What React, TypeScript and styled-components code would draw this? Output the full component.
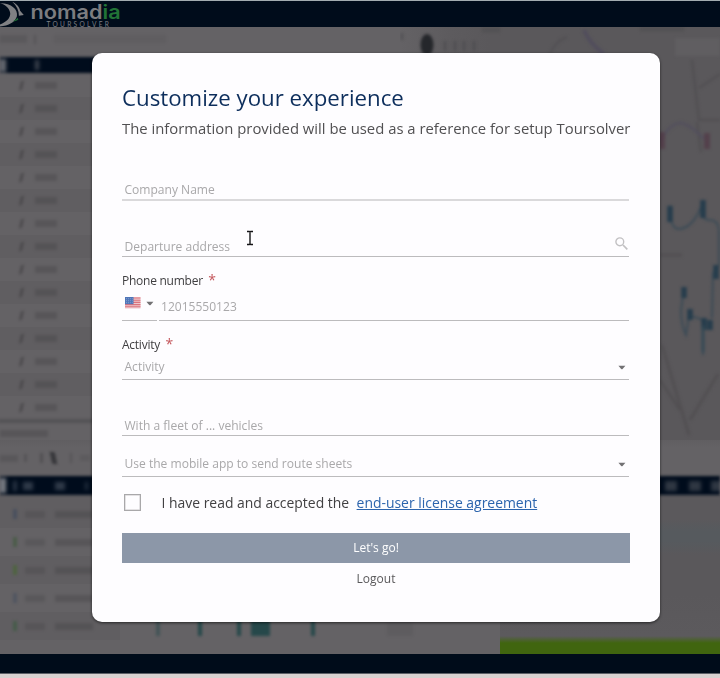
import React from "react";
import styled, { createGlobalStyle } from "styled-components";

const GlobalStyle = createGlobalStyle`
  * { box-sizing: border-box; }
  body { margin: 0; font-family: "Open Sans", sans-serif; background: #000c1a; }
`;

const Page = styled.div`
  width: 720px;
  height: 678px;
  display: flex;
  flex-direction: column;
  overflow: hidden;
`;
const TopBar = styled.header`
  height: 27px;
  flex: none;
  background: #000c1b;
  border-top: 1px solid #a3adb1;
  svg { display: block; overflow: visible; }
`;
const Workspace = styled.main`
  height: 627px;
  flex: none;
  position: relative;
  background: #646265;
`;
const BottomBar = styled.footer`
  height: 24px;
  flex: none;
  background: #000c1a;
  border-bottom: 4px solid #d8d2d0;
  box-shadow: inset 0 -1px #5d6167;
`;

/* Dimmed application behind the dialog */
const Backdrop = styled.div`
  height: 627px;
  display: flex;
  flex-direction: column;
  overflow: hidden;
`;
const Upper = styled.div`
  height: 413px;
  display: grid;
  grid-template-columns: 400px 1fr;
`;
const Sheet = styled.div`
  display: flex;
  flex-direction: column;
  overflow: hidden;
`;
const SheetTools = styled.div<{ $h: number }>`
  height: ${(p) => p.$h}px;
  flex: none;
  display: flex;
  align-items: center;
  gap: 10px;
  padding-bottom: 6px;
`;
const DarkHeader = styled.div<{ $h: number }>`
  height: ${(p) => p.$h}px;
  flex: none;
  display: flex;
  align-items: center;
  background: #000c1c;
  filter: blur(1.6px);
`;
const SheetRow = styled.div<{ $h: number; $alt?: boolean }>`
  height: ${(p) => p.$h}px;
  flex: none;
  display: flex;
  align-items: center;
  background: ${(p) => (p.$alt ? "#605e61" : "#646265")};
`;
const Smudge = styled.span<{ $w: number; $h?: number; $ml?: number; $c?: string; $o?: number; $skew?: number }>`
  width: ${(p) => p.$w}px;
  height: ${(p) => p.$h ?? 8}px;
  margin-left: ${(p) => p.$ml ?? 0}px;
  background: ${(p) => p.$c ?? "#403f42"};
  opacity: ${(p) => p.$o ?? 0.45};
  transform: skewX(${(p) => p.$skew ?? 0}deg);
  filter: blur(1.8px);
  flex: none;
`;
const MapPane = styled.div`
  background: linear-gradient(90deg, #646265, #5d5b5e 50px, #5a585b 90px);
  overflow: hidden;
  svg { display: block; }
`;
const Strip = styled.div`
  height: 36px;
  flex: none;
  display: flex;
  align-items: center;
  background: linear-gradient(#605e61, #646265 8px);
`;
const Lower = styled.div`
  flex: 1;
  display: grid;
  grid-template-columns: 120px 380px 1fr;
`;
const Timeline = styled.div`
  display: flex;
  align-items: flex-end;
  padding-bottom: 18px;
`;
const GreenPane = styled.div`
  display: flex;
  align-items: flex-end;
  background: linear-gradient(#5b595c 0 24px, #565a5e 36px 46px, #5a585b 60px 100px, #5c5a5d 140px);
`;
const GreenStrip = styled.div`
  height: 18px;
  flex: 1;
  background: linear-gradient(#5a5b5900, #40650f 7px);
`;

/* Dialog */
const Dialog = styled.section`
  position: absolute;
  left: 92px;
  top: 26.4px;
  width: 568px;
  height: 568.2px;
  padding: 29.6px 30px 0;
  display: flex;
  flex-direction: column;
  background: #fefdff;
  border-radius: 10px;
  box-shadow: 0 1px 3px rgba(0, 0, 0, 0.6);
`;
const Title = styled.h1`
  margin: 0;
  height: 30px;
  line-height: 30px;
  font-size: 22.25px;
  font-weight: 400;
  color: #0d2e5c;
  white-space: nowrap;
`;
const Subtitle = styled.p`
  margin: 4px 0 1px;
  height: 22px;
  line-height: 22px;
  font-size: 14.85px;
  color: #515052;
  white-space: nowrap;
`;
const Field = styled.div<{ $mt: number; $h: number; $pb: number; $line?: number }>`
  margin-top: ${(p) => p.$mt}px;
  height: ${(p) => p.$h}px;
  width: 507.4px;
  padding: 0 2.5px ${(p) => p.$pb}px;
  display: flex;
  align-items: flex-end;
  justify-content: space-between;
  border-bottom: ${(p) => p.$line ?? 1}px solid ${(p) => (p.$line ? "#dad9db" : "#bcbbbd")};
`;
const Placeholder = styled.span`
  font-size: 12.05px;
  line-height: 16px;
  color: #a9a8aa;
  white-space: nowrap;
`;
const Label = styled.label<{ $mt: number }>`
  margin-top: ${(p) => p.$mt}px;
  height: 16px;
  display: flex;
  gap: 5.5px;
  font-size: 12px;
  line-height: 16px;
  color: #3f3e40;
  letter-spacing: -0.25px;
`;
const Required = styled.span`
  font-size: 14px;
  line-height: 13px;
  color: #c4575c;
`;
const PhoneRow = styled.div`
  display: grid;
  grid-template-columns: 35px 470.4px;
  column-gap: 2px;
  height: 32px;
`;
const PhoneCell = styled.div<{ $pb: number; $pl: number }>`
  display: flex;
  align-items: flex-end;
  gap: 5px;
  padding: 0 0 ${(p) => p.$pb}px ${(p) => p.$pl}px;
  border-bottom: 1px solid #bcbbbd;
`;
const Agreement = styled.div`
  margin-top: 15.6px;
  height: 20px;
  display: flex;
  align-items: center;
  padding-left: 2px;
  font-size: 13.93px;
  line-height: 20px;
  color: #414042;
  white-space: nowrap;
`;
const Checkbox = styled.span`
  width: 17px;
  height: 17px;
  margin-right: 20.5px;
  border: 1px solid #a9a8aa;
  box-shadow: inset 0 0 0 0.5px #c9c8ca;
`;
const License = styled.a`
  margin-left: 7.5px;
  color: #2c64ad;
  text-decoration: underline;
  text-underline-offset: 1px;
`;
const Submit = styled.button`
  margin-top: 20px;
  height: 30.4px;
  flex: none;
  padding: 0;
  border: 0;
  background: #8c97a8;
  color: #fff;
  font: 12px/30px "Open Sans", sans-serif;
`;
const Logout = styled.a`
  margin-top: 7px;
  line-height: 18px;
  text-align: center;
  font-size: 12px;
  color: #5a595b;
`;
const SearchIcon = styled.svg`
  margin: 0 -1px 5px 0;
`;
const Cursor = styled.svg`
  position: absolute;
  left: 246px;
  top: 202.5px;
`;
const CaretIcon = styled.svg<{ $mb: number }>`
  margin-bottom: ${(p) => p.$mb}px;
  margin-right: 1px;
`;

const Caret = ({ mb = 3 }: { mb?: number }) => (
  <CaretIcon $mb={mb} width="8" height="5" viewBox="0 0 8 5">
    <path d="M.4.8h7L4.6 4.1q-.7.5-1.4 0z" fill="#727173" />
  </CaretIcon>
);

const Flag = () => (
  <svg width="16" height="12" viewBox="0 0 16 12">
    <rect width="15.5" height="11.5" rx=".5" fill="#eec6cb" />
    <path d="M0 1h15.5M0 3.2h15.5M0 5.4h15.5M0 7.6h15.5M0 9.8h15.5" stroke="#dc747d" strokeWidth="1.1" />
    <rect width="8.5" height="7.2" fill="#5076b8" />
    <path d="M1 1.7h7M1 3.7h7M1 5.7h7" stroke="#9bb2da" strokeWidth=".7" strokeDasharray="1 1.1" />
  </svg>
);

const Logo = () => (
  <svg width="130" height="26" viewBox="0 1 130 26">
    <g fill="#808184">
      <path d="M0 3.2C5 4.4 9.5 8 10.2 13 10.6 18 6.5 22 0 24.5v1.9c8.5-.5 15.3-4.3 16.9-10.2C18.2 9.2 11 3 0 3.2z" />
      <path d="M12.3 1.8c4.2 2 7.2 5.3 7.8 8.9l3.7 4.2-4.900.9c.1-5.200-2.100-9.800-6.600-14z" />
    </g>
    <path d="M12.3 21.3c2.300-.8 4-2 5.300-3.600l.8 1.900c-1.600 1.300-3.600 2-6.100 1.700z" fill="#1f6a35" />
    <text x="30.6" y="18.9" fontFamily="Inter, sans-serif" fontSize="19.4" fontWeight="600" textLength="90" lengthAdjust="spacingAndGlyphs" fill="#7c7d80">
      nomad<tspan fill="#217336">ia</tspan>
    </text>
    <text x="46.5" y="27" fontFamily="Lato, sans-serif" fontSize="6.6" textLength="62.5" fill="#7b7e84">TOURSOLVER</text>
  </svg>
);

const MapDrawing = () => (
  <svg width="320" height="413" viewBox="400 27 320 413">
    <defs>
      <filter id="soft" x="-20%" y="-20%" width="140%" height="140%" colorInterpolationFilters="sRGB"><feGaussianBlur stdDeviation="1.5" /></filter>
    </defs>
    <g filter="url(#soft)" fill="none">
      <ellipse cx="427" cy="45" rx="6.5" ry="11" fill="#25272b" />
      <path d="M402 33v7M445 41v10M455 41v10M464 41v10M474 41v10" stroke="#454447" strokeWidth="2.5" opacity=".55" />
      <path d="M482 30h18M640 29h44" stroke="#4c4b4e" strokeWidth="5" opacity=".5" />
      <path d="M675 38h45v18h-45z" fill="#605e61" />
      <path d="M550 54q5-13 17-17" stroke="#514f53" strokeWidth="2" />
      <path d="M584 30q6 14 20 24" stroke="#514d5c" strokeWidth="4" />
      <path d="M692 60l7 60h21M699 88l21-14M697 122l4 30" stroke="#504e51" strokeWidth="2" />
      <path d="M660 142q10-20 22-19 10 3 22 16" stroke="#514d5e" strokeWidth="2.5" opacity=".8" />
      <path d="M662 132v17M707 133v16" stroke="#513a47" strokeWidth="6" opacity=".75" />
      <path d="M670 205q-1 22 8 24 14 0 23-22 1 14 9 13 8 0 9 10v35l-6 8-1 45M684 290l-3 20q0 15 5 25l3-20 14 5v35" stroke="#3c4b56" strokeWidth="2" />
      <path d="M670 206v16M703 200v18M716 265v14M684 287v11M690 309v11M704 318v12M710 320v10" stroke="#263d4c" strokeWidth="5.5" />
      <path d="M703 326v26" stroke="#344955" strokeWidth="3" />
      <path d="M660 255h22M662 345l27 90M718 374l-28 46M660 380l20 30" stroke="#4e4c4f" strokeWidth="3" opacity=".7" />
    </g>
  </svg>
);

const CHART_BARS: [number, number, number][] = [
  [36, 4, 12], [38, 4, 15], [35, 4, 15], [10, 19, 15], [41, 4, 15],
];
const DETAIL_COLORS = ["#34425a", "#34562f", "#3e6a20", "#3f4a5c", "#2f5a35"];

const Background = () => (
  <Backdrop>
    <Upper>
      <Sheet>
        <SheetTools $h={30}>
          <Smudge $w={27} $o={0.25} />
          <Smudge $w={2} $h={9} $ml={-3} $o={0.4} />
          <Smudge $w={112} $ml={8} $o={0.12} />
        </SheetTools>
        <DarkHeader $h={16}>
          <Smudge $w={6} $h={13} $c="#99979a" $o={0.7} />
          <Smudge $w={4} $h={10} $ml={29} $c="#8a898c" $o={0.45} />
        </DarkHeader>
        <SheetRow $h={1} />
        {Array.from({ length: 15 }, (_, i) => (
          <SheetRow key={i} $h={23} $alt={i % 2 === 1}>
            <Smudge $w={3} $h={9} $ml={20} $o={0.65} $skew={-12} />
            <Smudge $w={22} $h={7} $ml={12} $o={0.35} />
          </SheetRow>
        ))}
        <Smudge $w={404} $h={4} $ml={-2} $o={0.45} />
        <SheetTools $h={26}>
          <Smudge $w={48} $h={7} $o={0.35} />
        </SheetTools>
      </Sheet>
      <MapPane><MapDrawing /></MapPane>
    </Upper>
    <Strip>
      <Smudge $w={18} $h={7} $o={0.3} />
      <Smudge $w={3} $h={8} $ml={6} $o={0.4} />
      <Smudge $w={3} $h={10} $ml={13} $o={0.5} />
      <Smudge $w={5} $h={12} $ml={8} $c="#242529" $o={0.7} $skew={12} />
      <Smudge $w={2} $h={10} $ml={14} $o={0.4} />
      <Smudge $w={10} $h={6} $ml={8} $o={0.2} />
    </Strip>
    <DarkHeader $h={19}>
      <Smudge $w={6} $h={15} $c="#b5b3b6" $o={0.7} />
      <Smudge $w={4} $h={10} $ml={7} $c="#66707f" $o={0.4} />
      <Smudge $w={10} $h={8} $ml={6} $c="#77808c" $o={0.4} />
      <Smudge $w={10} $h={8} $ml={22} $c="#77808c" $o={0.4} />
      <Smudge $w={3} $h={8} $ml={20} $c="#77808c" $o={0.3} />
      <Smudge $w={12} $h={10} $ml={577} $c="#77787c" $o={0.4} />
      <Smudge $w={12} $h={10} $ml={12} $c="#77787c" $o={0.4} />
      <Smudge $w={12} $h={10} $ml={10} $c="#77787c" $o={0.4} />
    </DarkHeader>
    <Lower>
      <Sheet>
        <SheetRow $h={5} $alt />
        {DETAIL_COLORS.map((c, i) => (
          <SheetRow key={c} $h={28} $alt={i % 2 === 0}>
            <Smudge $w={4} $h={10} $ml={13} $c={c} $o={0.5} />
            <Smudge $w={20} $h={7} $ml={8} $o={0.28} />
            <Smudge $w={38} $h={7} $ml={10} $o={0.35} />
          </SheetRow>
        ))}
      </Sheet>
      <Timeline>
        {CHART_BARS.map(([ml, w, h], i) => (
          <Smudge key={i} $w={w} $h={h + 10} $ml={ml} $c="#1c4446" $o={i ? 0.85 : 0.45} />
        ))}
        <Smudge $w={26} $h={14} $ml={72} $o={0.15} />
      </Timeline>
      <GreenPane><GreenStrip /></GreenPane>
    </Lower>
  </Backdrop>
);

export default function App() {
  return (
    <Page>
      <GlobalStyle />
      <TopBar><Logo /></TopBar>
      <Workspace>
        <Background />
        <Dialog>
          <Title>Customize your experience</Title>
          <Subtitle>The information provided will be used as a reference for setup Toursolver</Subtitle>
          <Field $mt={38} $h={23} $pb={1} $line={2}>
            <Placeholder>Company Name</Placeholder>
          </Field>
          <Field $mt={33} $h={23} $pb={1}>
            <Placeholder>Departure address</Placeholder>
            <SearchIcon width="13" height="13" viewBox="0 0 13 13">
              <path d="M8 8l4.3 4.3" stroke="#c2c1c3" strokeWidth="1.7" />
              <circle cx="4.8" cy="4.8" r="3.9" fill="none" stroke="#c2c1c3" strokeWidth="1.4" />
            </SearchIcon>
          </Field>
          <Label $mt={16}>Phone number <Required>*</Required></Label>
          <PhoneRow>
            <PhoneCell $pb={11} $pl={3}><Flag /><Caret /></PhoneCell>
            <PhoneCell $pb={5} $pl={2}><Placeholder>12015550123</Placeholder></PhoneCell>
          </PhoneRow>
          <Label $mt={16}>Activity <Required>*</Required></Label>
          <Field $mt={4} $h={23} $pb={4}>
            <Placeholder>Activity</Placeholder>
            <Caret mb={5} />
          </Field>
          <Field $mt={33} $h={23} $pb={1}>
            <Placeholder>With a fleet of ... vehicles</Placeholder>
          </Field>
          <Field $mt={18} $h={23} $pb={4}>
            <Placeholder>Use the mobile app to send route sheets</Placeholder>
            <Caret mb={5} />
          </Field>
          <Agreement>
            <Checkbox />
            <span>I have read and accepted the</span>
            <License>end-user license agreement</License>
          </Agreement>
          <Submit>Let's go!</Submit>
          <Logout>Logout</Logout>
        </Dialog>
        <Cursor width="8" height="16" viewBox="0 0 8 16">
          <path d="M1 1.5h2.3L4 2.2l.7-.7H7M1 14.5h2.3l.7-.7.7.7H7M4 2v12" fill="none" stroke="#151517" strokeWidth="1.4" />
        </Cursor>
      </Workspace>
      <BottomBar />
    </Page>
  );
}
